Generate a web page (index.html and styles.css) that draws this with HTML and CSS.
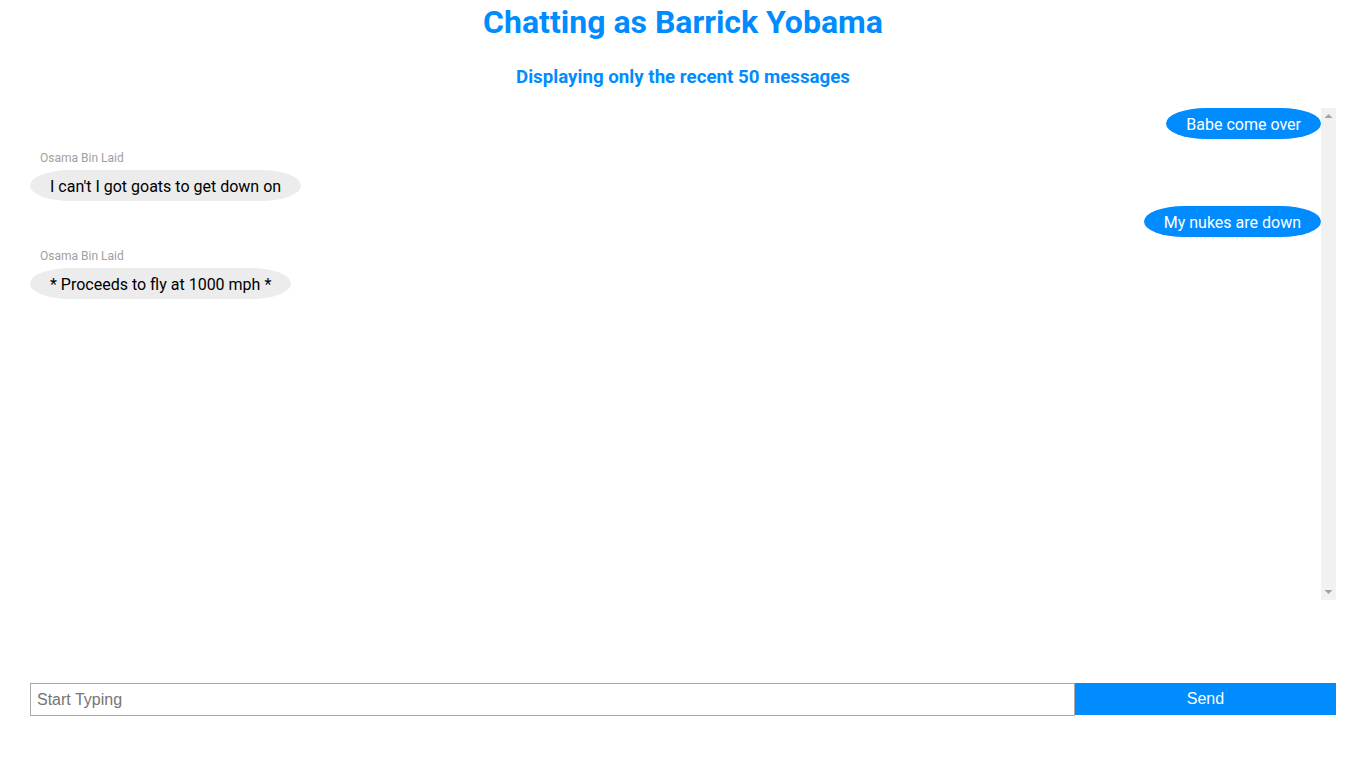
FILE: index.html
```html
<!DOCTYPE html>
<html>
<head>
<meta charset="utf-8">
<link rel="stylesheet" href="styles.css">
</head>
<body>
<div class="app">
  <h1 class="title">Chatting as Barrick Yobama</h1>
  <h3 class="subtitle">Displaying only the recent 50 messages</h3>
  <div class="chat">
    <div class="messages">
      <div class="msg sent"><div class="bubble">Babe come over</div></div>
      <div class="msg received"><div class="name">Osama Bin Laid</div><div class="bubble">I can't I got goats to get down on</div></div>
      <div class="msg sent"><div class="bubble">My nukes are down</div></div>
      <div class="msg received"><div class="name">Osama Bin Laid</div><div class="bubble">* Proceeds to fly at 1000 mph *</div></div>
    </div>
    <div class="scrollbar" aria-hidden="true">
      <div class="sb-btn"><svg width="15" height="15" viewBox="0 0 15 15"><path d="M3.5 10 L7.5 6 L11.5 10 Z" fill="#a3a3a3"/></svg></div>
      <div class="sb-btn"><svg width="15" height="15" viewBox="0 0 15 15"><path d="M3.5 5 L7.5 9 L11.5 5 Z" fill="#a3a3a3"/></svg></div>
    </div>
  </div>
  <form class="composer">
    <input class="input" type="text" placeholder="Start Typing">
    <button class="send" type="button">Send</button>
  </form>
</div>
</body>
</html>
```

FILE: styles.css
```css
html, body {
  margin: 0;
  padding: 0;
  background: #fff;
}
.app {
  margin: 0 11px 0 30px;
  font-family: Roboto, "Liberation Sans", sans-serif;
}
.title {
  margin: 3px 0 0;
  font-size: 32px;
  line-height: 38px;
  font-weight: 700;
  color: #008cff;
  text-align: center;
}
.subtitle {
  margin: 25px 0 0;
  font-size: 18.72px;
  line-height: 22px;
  font-weight: 700;
  color: #008cff;
  text-align: center;
}
.chat {
  margin-top: 20px;
  height: 492px;
  display: flex;
}
.messages {
  flex: 1;
  min-width: 0;
  overflow: hidden;
  display: flex;
  flex-direction: column;
}
.scrollbar {
  width: 15px;
  flex: none;
  background: #f1f1f1;
  display: flex;
  flex-direction: column;
  justify-content: space-between;
}
.sb-btn {
  height: 15px;
}
.sb-btn svg {
  display: block;
}
.msg {
  display: flex;
  flex-direction: column;
  margin-bottom: 5px;
}
.msg.sent {
  align-items: flex-end;
}
.msg.received {
  align-items: flex-start;
}
.name {
  font-size: 12px;
  line-height: 14px;
  padding: 7px 10px 5px;
  color: #a0a0a0;
}
.bubble {
  font-size: 16px;
  line-height: 19px;
  padding: 7px 20px 5px;
  border-radius: 40px / 50%;
}
.sent .bubble {
  background: #008cff;
  color: #fff;
}
.received .bubble {
  background: #ececec;
  color: #000;
}
.composer {
  margin: 83px 0 0;
  display: flex;
  align-items: flex-start;
}
.input {
  box-sizing: border-box;
  width: 80%;
  height: 33px;
  margin: 0;
  border: 1px solid #a9a9a9;
  padding: 0 6px;
  font-family: "Liberation Sans", Arial, sans-serif;
  font-size: 16px;
  outline: none;
}
.input::placeholder {
  color: #757575;
}
.send {
  width: 20%;
  height: 32px;
  margin: 0;
  border: none;
  background: #008cff;
  color: #fff;
  font-family: "Liberation Sans", Arial, sans-serif;
  font-size: 16px;
  padding: 0;
}
```
